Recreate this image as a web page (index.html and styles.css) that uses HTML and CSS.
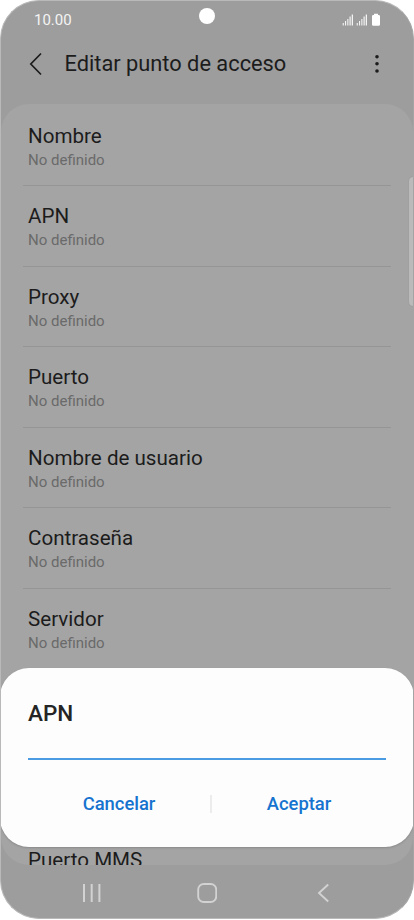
FILE: index.html
```html
<!DOCTYPE html>
<html lang="es">
<head>
    <meta charset="UTF-8">
    <meta name="viewport" content="width=device-width, initial-scale=1.0">
    <title>Editar punto de acceso</title>
    <link rel="stylesheet" href="styles.css">
</head>
<body>
    <div class="phone">
        <div class="status-bar">
            <span class="time">10.00</span>
            <svg class="status-icons" width="40" height="14" viewBox="0 0 40 14">
                <g id="signal" fill="#f4f4f4">
                    <rect x="1.7" y="10" width="1.1" height="2.5"/>
                    <rect x="4" y="8" width="1.1" height="4.5"/>
                    <rect x="6.3" y="6" width="1.1" height="6.5"/>
                    <rect x="8.5" y="3.5" width="1.2" height="9"/>
                    <rect x="10.7" y="1.5" width="1.3" height="11"/>
                </g>
                <use href="#signal" x="14"/>
                <path d="M33 .7h4v1.3h.7q1.3 0 1.3 1.3v8.2q0 1.2-1.3 1.2h-5.4q-1.3 0-1.3-1.2V3.3q0-1.3 1.3-1.3h.7z" fill="#fff"/>
            </svg>
        </div>
        <div class="camera"></div>

        <header class="header">
            <svg width="14" height="24" viewBox="0 0 14 24">
                <path d="M12 1.500 1.800 12 12 22.500" fill="none" stroke="#1c1c1c" stroke-width="1.7"/>
            </svg>
            <h1>Editar punto de acceso</h1>
            <svg class="more" width="6" height="20" viewBox="0 0 6 20" fill="#1c1c1c">
                <circle cx="3" cy="2.7" r="1.8"/>
                <circle cx="3" cy="9.8" r="1.8"/>
                <circle cx="3" cy="17" r="1.8"/>
            </svg>
        </header>

        <main class="settings">
            <div class="item"><h2>Nombre</h2><p>No definido</p></div>
            <div class="item"><h2>APN</h2><p>No definido</p></div>
            <div class="item"><h2>Proxy</h2><p>No definido</p></div>
            <div class="item"><h2>Puerto</h2><p>No definido</p></div>
            <div class="item"><h2>Nombre de usuario</h2><p>No definido</p></div>
            <div class="item"><h2>Contraseña</h2><p>No definido</p></div>
            <div class="item"><h2>Servidor</h2><p>No definido</p></div>
            <div class="item last"><h2>Puerto MMS</h2></div>
        </main>
        <div class="edge-handle"></div>

        <nav class="nav-bar">
            <svg width="20" height="20" viewBox="0 0 20 20">
                <path d="M3 1v18M10.700 1v18M18.400 1v18" stroke="#d2d2d2" stroke-width="2"/>
            </svg>
            <svg width="20" height="20" viewBox="0 0 20 20">
                <rect x="1.200" y="1" width="18" height="18" rx="5.500" fill="none" stroke="#d2d2d2" stroke-width="1.900"/>
            </svg>
            <svg width="20" height="20" viewBox="0 0 20 20">
                <path d="M15.200 1.500 6 10l9.200 8.500" fill="none" stroke="#d2d2d2" stroke-width="1.900"/>
            </svg>
        </nav>

        <div class="dialog">
            <h2>APN</h2>
            <input type="text" class="field" aria-label="APN">
            <div class="actions">
                <button class="cancel">Cancelar</button>
                <span class="separator"></span>
                <button class="accept">Aceptar</button>
            </div>
        </div>
    </div>
</body>
</html>
```
FILE: styles.css
```css
* {
    box-sizing: border-box;
}
body {
    margin: 0;
    background-color: #fff;
    font-family: Roboto, "Liberation Sans", sans-serif;
    color: #1c1c1c;
}
h1, h2, p {
    margin: 0;
    font-weight: 400;
}
.phone {
    position: relative;
    display: flex;
    flex-direction: column;
    width: 414px;
    height: 919px;
    border: 1px solid #b9b9b9;
    border-right-color: #a4a4a4;
    border-radius: 39px;
    background-color: #9d9d9d;
    overflow: hidden;
}
.status-bar {
    display: flex;
    justify-content: space-between;
    align-items: center;
    height: 38px;
    padding: 0 32px 0 33px;
}
.time {
    font-size: 15px;
    color: #f4f4f4;
}
.camera {
    position: absolute;
    top: 7px;
    left: 198px;
    width: 16px;
    height: 16px;
    border-radius: 50%;
    background-color: #fff;
}
.header {
    display: flex;
    align-items: center;
    height: 49px;
    padding: 0 33px 0 28px;
}
.header h1 {
    margin-left: 21.5px;
    font-size: 21.8px;
}
.more {
    margin-left: auto;
}
.settings {
    height: 761px;
    margin-top: 16px;
    padding: 1.5px 22px 0;
    border-radius: 28px;
    background-color: #a4a4a4;
    overflow: hidden;
}
.item {
    height: 80.5px;
    padding: 17px 5px 0;
    border-bottom: 1px solid #959595;
}
.item h2 {
    font-size: 20.6px;
    line-height: 26px;
}
.item p {
    font-size: 15px;
    line-height: 22px;
    color: #6a6a6a;
}
/* scrolled row, cut off by the navigation bar */
.item.last {
    margin-top: 161px;
    border-bottom: none;
}
.edge-handle {
    position: absolute;
    top: 176px;
    right: -1px;
    width: 5px;
    height: 129px;
    border-radius: 4px 0 0 4px;
    background-color: #bababa;
    box-shadow: 0 0 1px #858585;
}
.nav-bar {
    display: flex;
    justify-content: space-between;
    align-items: center;
    height: 53px;
    padding: 3px 80px 0;
}
.dialog {
    position: absolute;
    top: 667px;
    left: -1px;
    width: 414px;
    height: 179px;
    padding: 30px 28px 0;
    border-radius: 29px;
    background-color: #fdfdfd;
    box-shadow: 0 1px 2px #8a8a8a;
}
.dialog h2 {
    font-size: 22.5px;
    line-height: 30px;
    font-weight: 500;
    color: #252525;
}
.field {
    display: block;
    width: 100%;
    height: 32px;
    padding: 0;
    border: none;
    border-bottom: 2px solid #4b9be2;
    background: none;
    font: inherit;
    outline: none;
}
.actions {
    display: flex;
    align-items: center;
    height: 87px;
}
.actions button {
    padding: 0;
    border: none;
    background: none;
    font-family: inherit;
    font-size: 18.4px;
    font-weight: 500;
    color: #1673cf;
}
.actions .cancel {
    width: 182px;
}
.actions .accept {
    flex: 1;
}
.separator {
    width: 2px;
    height: 18px;
    background-color: #ececec;
}
```
